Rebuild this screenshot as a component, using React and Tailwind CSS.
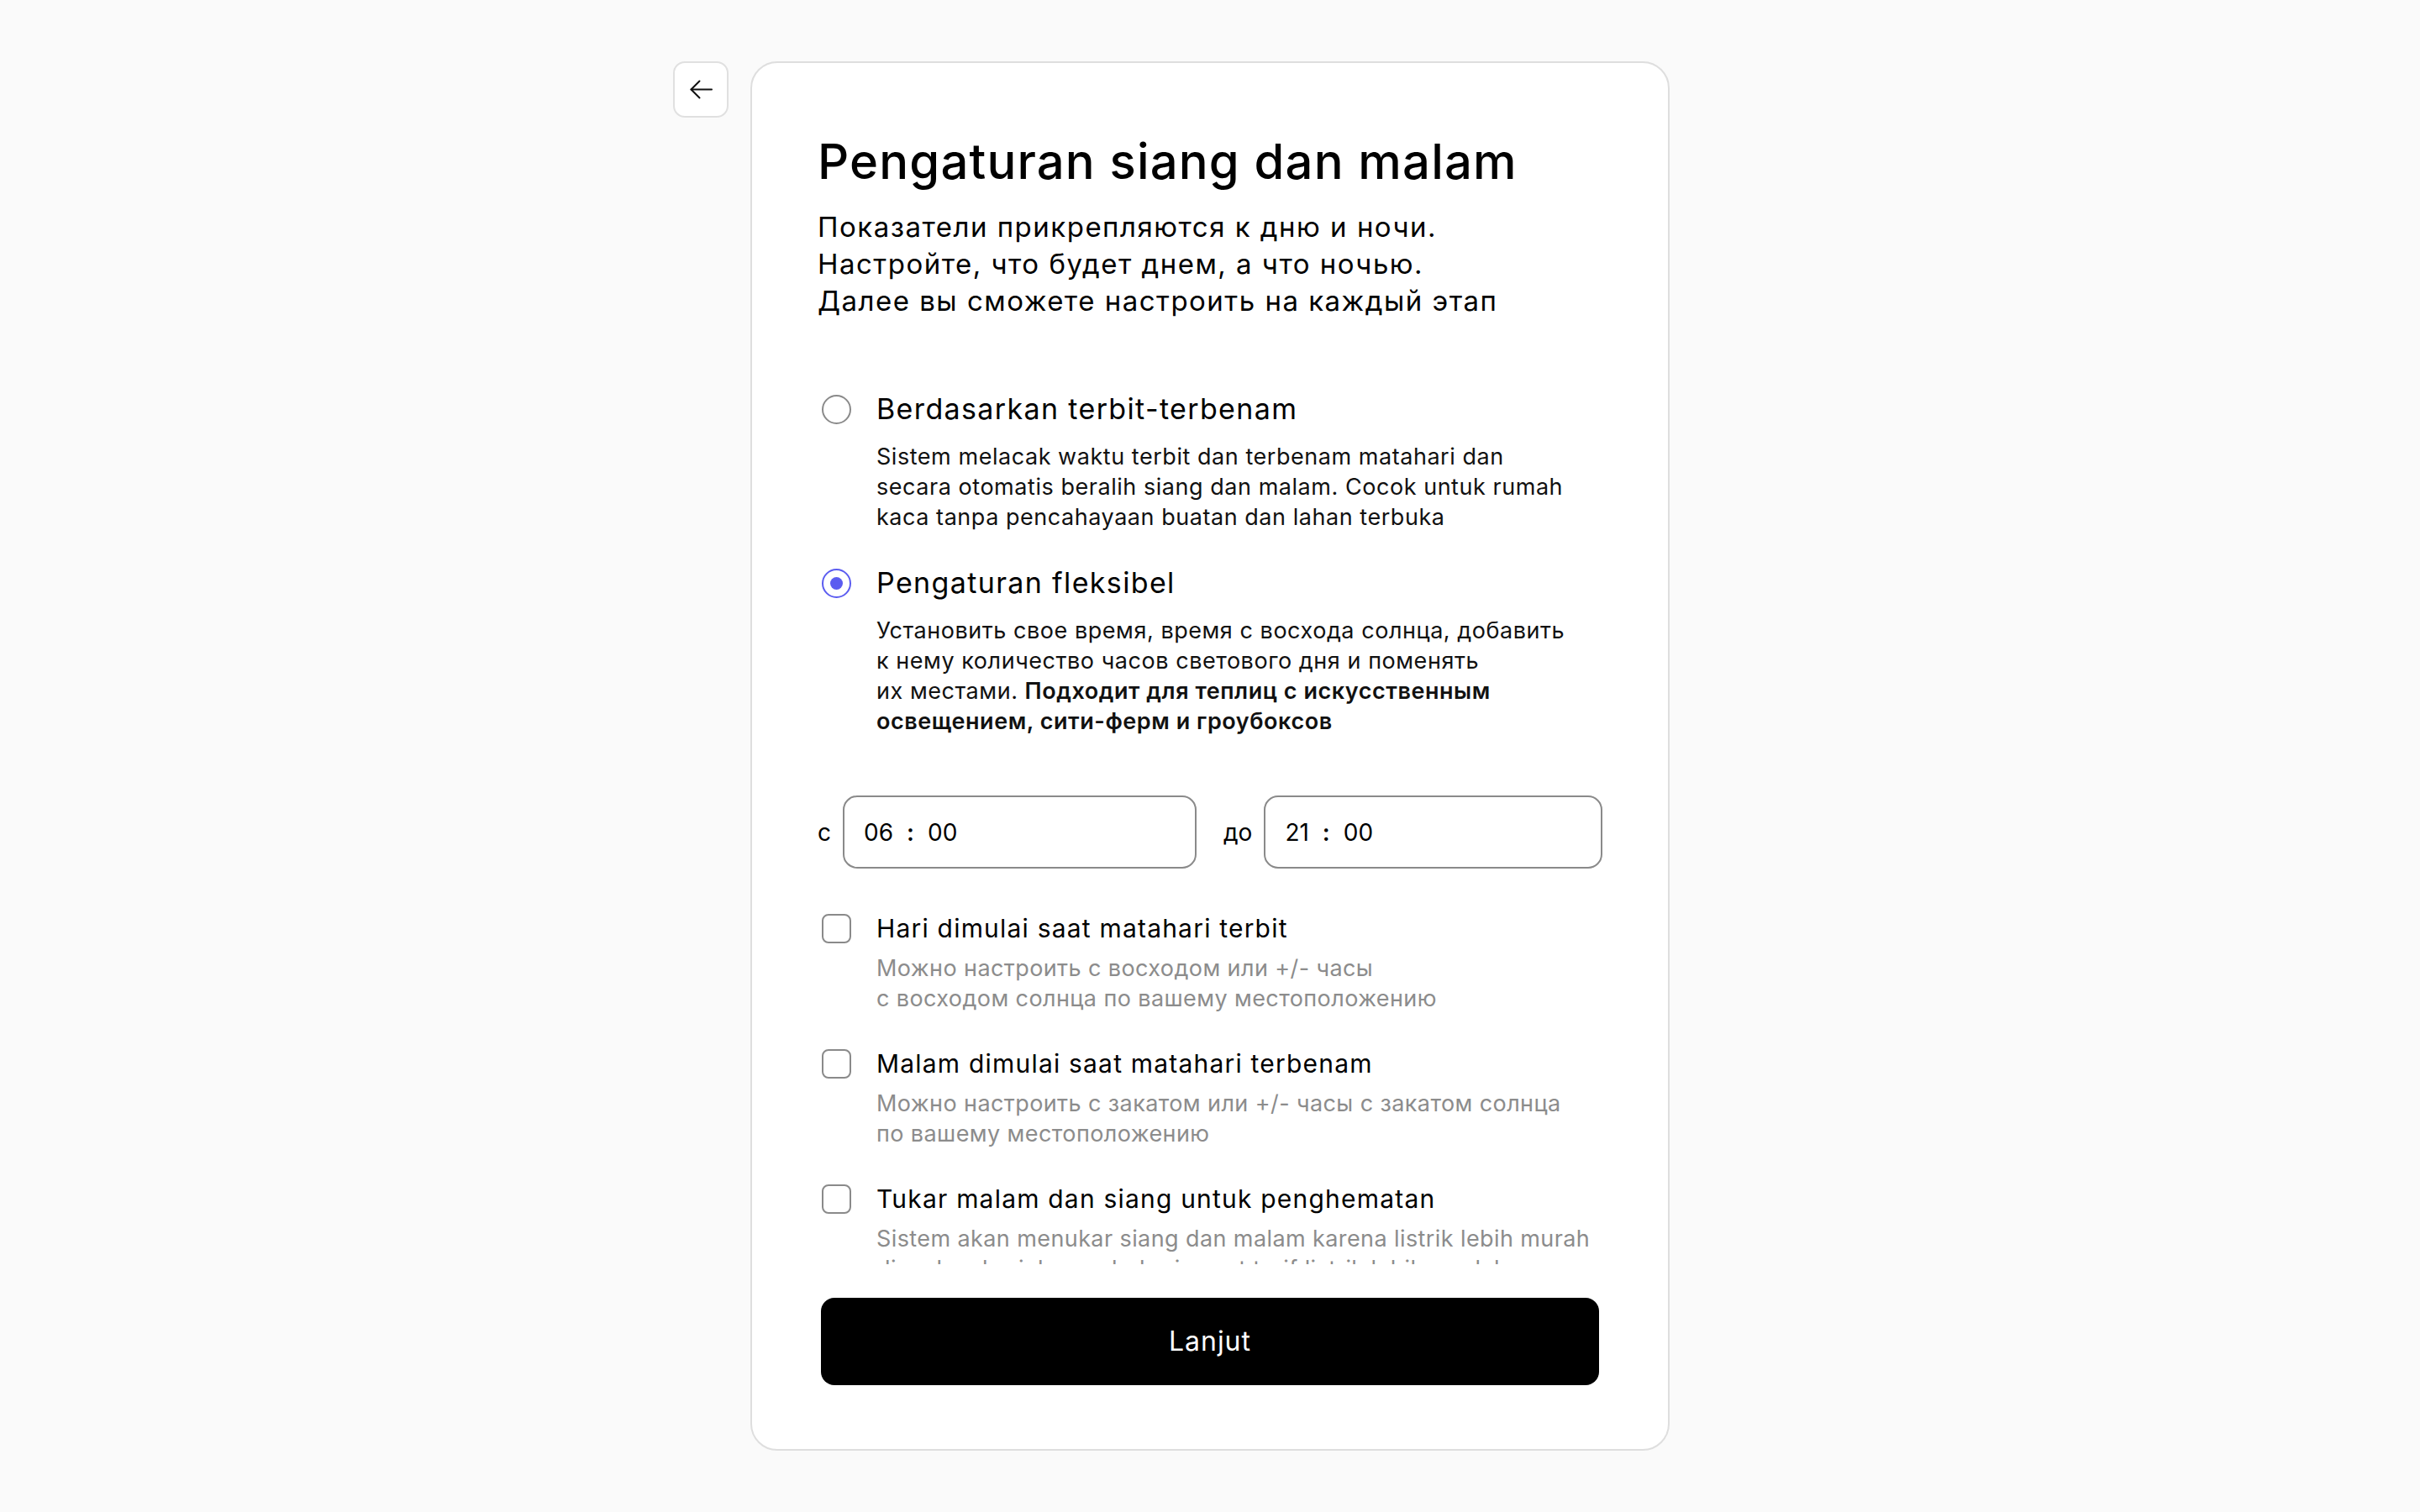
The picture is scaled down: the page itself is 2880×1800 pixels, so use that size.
import React, { useState } from 'react';

const radioOptions = [
  {
    id: 'sun',
    label: 'Berdasarkan terbit-terbenam',
    lines: [
      'Sistem melacak waktu terbit dan terbenam matahari dan',
      'secara otomatis beralih siang dan malam. Cocok untuk rumah',
      'kaca tanpa pencahayaan buatan dan lahan terbuka',
    ],
  },
  {
    id: 'flex',
    label: 'Pengaturan fleksibel',
    lines: [
      'Установить свое время, время с восхода солнца, добавить',
      'к нему количество часов светового дня и поменять',
      <>
        их местами. <b className="font-semibold">Подходит для теплиц с искусственным</b>
      </>,
      <b className="font-semibold">освещением, сити-ферм и гроубоксов</b>,
    ],
  },
];

const checkOptions = [
  {
    id: 'dawn',
    label: 'Hari dimulai saat matahari terbit',
    lines: ['Можно настроить с восходом или +/- часы', 'с восходом солнца по вашему местоположению'],
  },
  {
    id: 'dusk',
    label: 'Malam dimulai saat matahari terbenam',
    lines: ['Можно настроить с закатом или +/- часы с закатом солнца', 'по вашему местоположению'],
  },
  {
    id: 'swap',
    label: 'Tukar malam dan siang untuk penghematan',
    lines: [
      'Sistem akan menukar siang dan malam karena listrik lebih murah',
      'di malam hari, lampu bekerja saat tarif listrik lebih rendah',
    ],
  },
];

function Radio({ checked }) {
  return (
    <span
      className={`w-[35px] h-[35px] rounded-full border-2 flex items-center justify-center ${
        checked ? 'border-[#5b5cf0]' : 'border-[#8a8a8a]'
      }`}
    >
      {checked && <span className="w-[15px] h-[15px] rounded-full bg-[#5b5cf0]" />}
    </span>
  );
}

function Checkbox() {
  return <span className="w-[35px] h-[35px] rounded-[8px] border-2 border-[#8a8a8a]" />;
}

function TimeField({ label, hh, mm }) {
  return (
    <div className="flex-1 flex items-center gap-[14px]">
      <span className="text-[28px] leading-none text-black">{label}</span>
      <div className="flex-1 h-[87px] rounded-[17px] border-2 border-[#8a8a8a] flex items-center px-[23px] text-[28px] text-black">
        <span>{hh}</span>
        <span className="mx-[16px] font-semibold">:</span>
        <span>{mm}</span>
      </div>
    </div>
  );
}

export default function App() {
  const [mode, setMode] = useState('flex');

  return (
    <div className="h-screen bg-[#fafafa] py-[73px] grid grid-cols-[1fr_1094px_1fr] grid-rows-[minmax(0,1fr)] font-['Inter',sans-serif] text-black">
      <div className="flex justify-end items-start pr-[26px]">
        <button className="w-[66px] h-[67px] rounded-[14px] border-2 border-[#e0e0e0] bg-white flex items-center justify-center">
          <svg width="27" height="23" viewBox="0 0 27 23" fill="none" stroke="#111" strokeWidth="2" strokeLinecap="round" strokeLinejoin="round">
            <path d="M26 11.5H1.5" />
            <path d="M11.5 1.5 1.5 11.5l10 10" />
          </svg>
        </button>
      </div>

      <div className="h-full min-h-0 bg-white border-2 border-[#dedede] rounded-[32px] px-[78px] pt-[80px] pb-[76px] flex flex-col">
        <div className="flex-1 min-h-0 overflow-y-auto [scrollbar-width:none] pt-[5px]">
          <h1 className="text-[58px] leading-[64px] font-medium tracking-[0.02em] whitespace-nowrap">
            Pengaturan siang dan malam
          </h1>
          <p className="mt-[24px] text-[33px] leading-[44px] tracking-[0.045em] whitespace-nowrap">
            Показатели прикрепляются к дню и ночи.
            <br />
            Настройте, что будет днем, а что ночью.
            <br />
            Далее вы сможете настроить на каждый этап
          </p>

          <div className="mt-[87px] flex flex-col gap-[40px]">
            {radioOptions.map((opt) => (
              <div key={opt.id} className="cursor-pointer" onClick={() => setMode(opt.id)}>
                <div className="flex items-center h-[40px]">
                  <span className="w-[45px] flex justify-center">
                    <Radio checked={mode === opt.id} />
                  </span>
                  <span className="ml-[25px] text-[34px] leading-[40px] tracking-[0.04em] whitespace-nowrap">
                    {opt.label}
                  </span>
                </div>
                <div className="mt-[19px] ml-[70px] text-[27px] leading-[36px] tracking-[0.02em] text-[#111]">
                  {opt.lines.map((line, i) => (
                    <div key={i} className="whitespace-nowrap">
                      {line}
                    </div>
                  ))}
                </div>
              </div>
            ))}
          </div>

          <div className="mt-[70px] flex gap-[32px]">
            <TimeField label="с" hh="06" mm="00" />
            <TimeField label="до" hh="21" mm="00" />
          </div>

          <div className="mt-[51px] flex flex-col gap-[39px]">
            {checkOptions.map((opt) => (
              <div key={opt.id}>
                <div className="flex items-center h-[40px]">
                  <span className="w-[45px] flex justify-center">
                    <Checkbox />
                  </span>
                  <span className="ml-[25px] text-[30px] leading-[40px] tracking-[0.04em] whitespace-nowrap">
                    {opt.label}
                  </span>
                </div>
                <div className="mt-[10px] ml-[70px] text-[27px] leading-[36px] tracking-[0.015em] text-[#8c8c8c]">
                  {opt.lines.map((line, i) => (
                    <div key={i} className="whitespace-nowrap">
                      {line}
                    </div>
                  ))}
                </div>
              </div>
            ))}
          </div>
        </div>

        <button className="mt-[40px] mx-[4px] h-[104px] shrink-0 rounded-[16px] bg-black text-white text-[32px] tracking-[0.03em]">
          Lanjut
        </button>
      </div>

      <div />
    </div>
  );
}
